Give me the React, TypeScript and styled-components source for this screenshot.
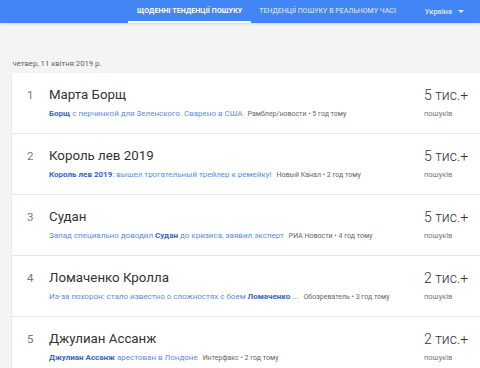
import React from "react";
import styled, { createGlobalStyle } from "styled-components";

const Global = createGlobalStyle`
  html, body { margin: 0; padding: 0; }
  body {
    background: #f4f4f4;
    font-family: Roboto, "Noto Sans", Arial, sans-serif;
    width: 480px;
    height: 368px;
    overflow: hidden;
  }
`;

const Header = styled.header`
  height: 23px;
  background: #4285f4;
  display: flex;
  align-items: stretch;
  padding-left: 128px;
  box-shadow: 0 1px 3px rgba(0,0,0,0.15);
`;

const Tab = styled.div<{ $active?: boolean }>`
  display: flex;
  align-items: center;
  padding: 0 ${(p) => (p.$active ? 9 : 8)}px;
  font-size: 7px;
  font-weight: ${(p) => (p.$active ? 700 : 500)};
  letter-spacing: ${(p) => (p.$active ? 0.1 : 0)}px;
  text-transform: uppercase;
  white-space: nowrap;
  color: ${(p) => (p.$active ? "#ffffff" : "rgba(255,255,255,0.72)")};
  border-bottom: 2px solid ${(p) => (p.$active ? "#ffffff" : "transparent")};
  box-sizing: border-box;
`;

const Region = styled.div`
  display: flex;
  align-items: center;
  gap: 6px;
  margin-left: 21px;
  font-size: 7.5px;
  font-weight: 500;
  color: rgba(255,255,255,0.85);
`;

const Arrow = styled.span`
  width: 0;
  height: 0;
  border-left: 3px solid transparent;
  border-right: 3px solid transparent;
  border-top: 3.5px solid rgba(255,255,255,0.85);
`;

const Main = styled.main`
  padding: 34px 0 0 12px;
  overflow: hidden;
`;

const DateLine = styled.div`
  font-size: 7.7px;
  color: #5f5f5f;
  height: 13px;
  line-height: 13px;
  margin-bottom: 3px;
  padding-left: 0.5px;
`;

const Card = styled.div`
  width: calc(100% + 8px);
  background: #fff;
  box-shadow: 0 1px 2px rgba(0,0,0,0.12);
`;

const Row = styled.div`
  display: flex;
  height: 61px;
  box-sizing: border-box;
  border-bottom: 1px solid #e6e6e6;
  padding-top: 14px;
`;

const Rank = styled.div`
  width: 37px;
  padding-left: 15px;
  box-sizing: border-box;
  font-size: 11.5px;
  color: #7a7a7a;
  line-height: 16px;
`;

const Body = styled.div`
  width: 375px;
  min-width: 0;
`;

const Title = styled.div`
  font-size: 13.3px;
  color: #333;
  line-height: 16px;
  height: 16px;
  margin-bottom: 5px;
`;

const Snippet = styled.div`
  font-size: 8px;
  line-height: 12px;
  white-space: nowrap;
  color: #5a8de0;
`;

const Strong = styled.b`
  color: #3367c4;
  font-weight: 700;
`;

const Source = styled.span`
  color: #666;
  font-size: 7px;
  margin-left: 5px;
`;

const Volume = styled.div`
  display: flex;
  flex-direction: column;
`;

const Count = styled.div`
  font-size: 14px;
  font-weight: 300;
  color: #333;
  line-height: 16px;
  height: 16px;
  margin-bottom: 5px;
`;

const Searches = styled.div`
  font-size: 7.5px;
  color: #777;
  line-height: 12px;
`;

type Part = { t: string; b?: boolean };
type Item = { title: string; snippet: Part[]; source: string; count: string };

const items: Item[] = [
  {
    title: "Марта Борщ",
    snippet: [{ t: "Борщ", b: true }, { t: " с перчинкой для Зеленского. Сварено в США" }],
    source: "Рамблер/новости • 5 год тому",
    count: "5 тис.+",
  },
  {
    title: "Король лев 2019",
    snippet: [{ t: "Король лев 2019", b: true }, { t: ": вышел трогательный трейлер к ремейку!" }],
    source: "Новый Канал • 2 год тому",
    count: "5 тис.+",
  },
  {
    title: "Судан",
    snippet: [
      { t: "Запад специально доводил " },
      { t: "Судан", b: true },
      { t: " до кризиса, заявил эксперт" },
    ],
    source: "РИА Новости • 4 год тому",
    count: "5 тис.+",
  },
  {
    title: "Ломаченко Кролла",
    snippet: [
      { t: "Из-за похорон: стало известно о сложностях с боем " },
      { t: "Ломаченко", b: true },
      { t: " ..." },
    ],
    source: "Обозреватель • 3 год тому",
    count: "2 тис.+",
  },
  {
    title: "Джулиан Ассанж",
    snippet: [{ t: "Джулиан Ассанж", b: true }, { t: " арестован в Лондоне" }],
    source: "Интерфакс • 2 год тому",
    count: "2 тис.+",
  },
];

export default function App() {
  return (
    <>
      <Global />
      <Header>
        <Tab $active>Щоденні тенденції пошуку</Tab>
        <Tab>Тенденції пошуку в реальному часі</Tab>
        <Region>
          Україна <Arrow />
        </Region>
      </Header>
      <Main>
        <DateLine>четвер, 11 квітня 2019 р.</DateLine>
        <Card>
          {items.map((it, i) => (
            <Row key={i}>
              <Rank>{i + 1}</Rank>
              <Body>
                <Title>{it.title}</Title>
                <Snippet>
                  {it.snippet.map((p, j) =>
                    p.b ? <Strong key={j}>{p.t}</Strong> : <span key={j}>{p.t}</span>
                  )}
                  <Source>{it.source}</Source>
                </Snippet>
              </Body>
              <Volume>
                <Count>{it.count}</Count>
                <Searches>пошуків</Searches>
              </Volume>
            </Row>
          ))}
        </Card>
      </Main>
    </>
  );
}
